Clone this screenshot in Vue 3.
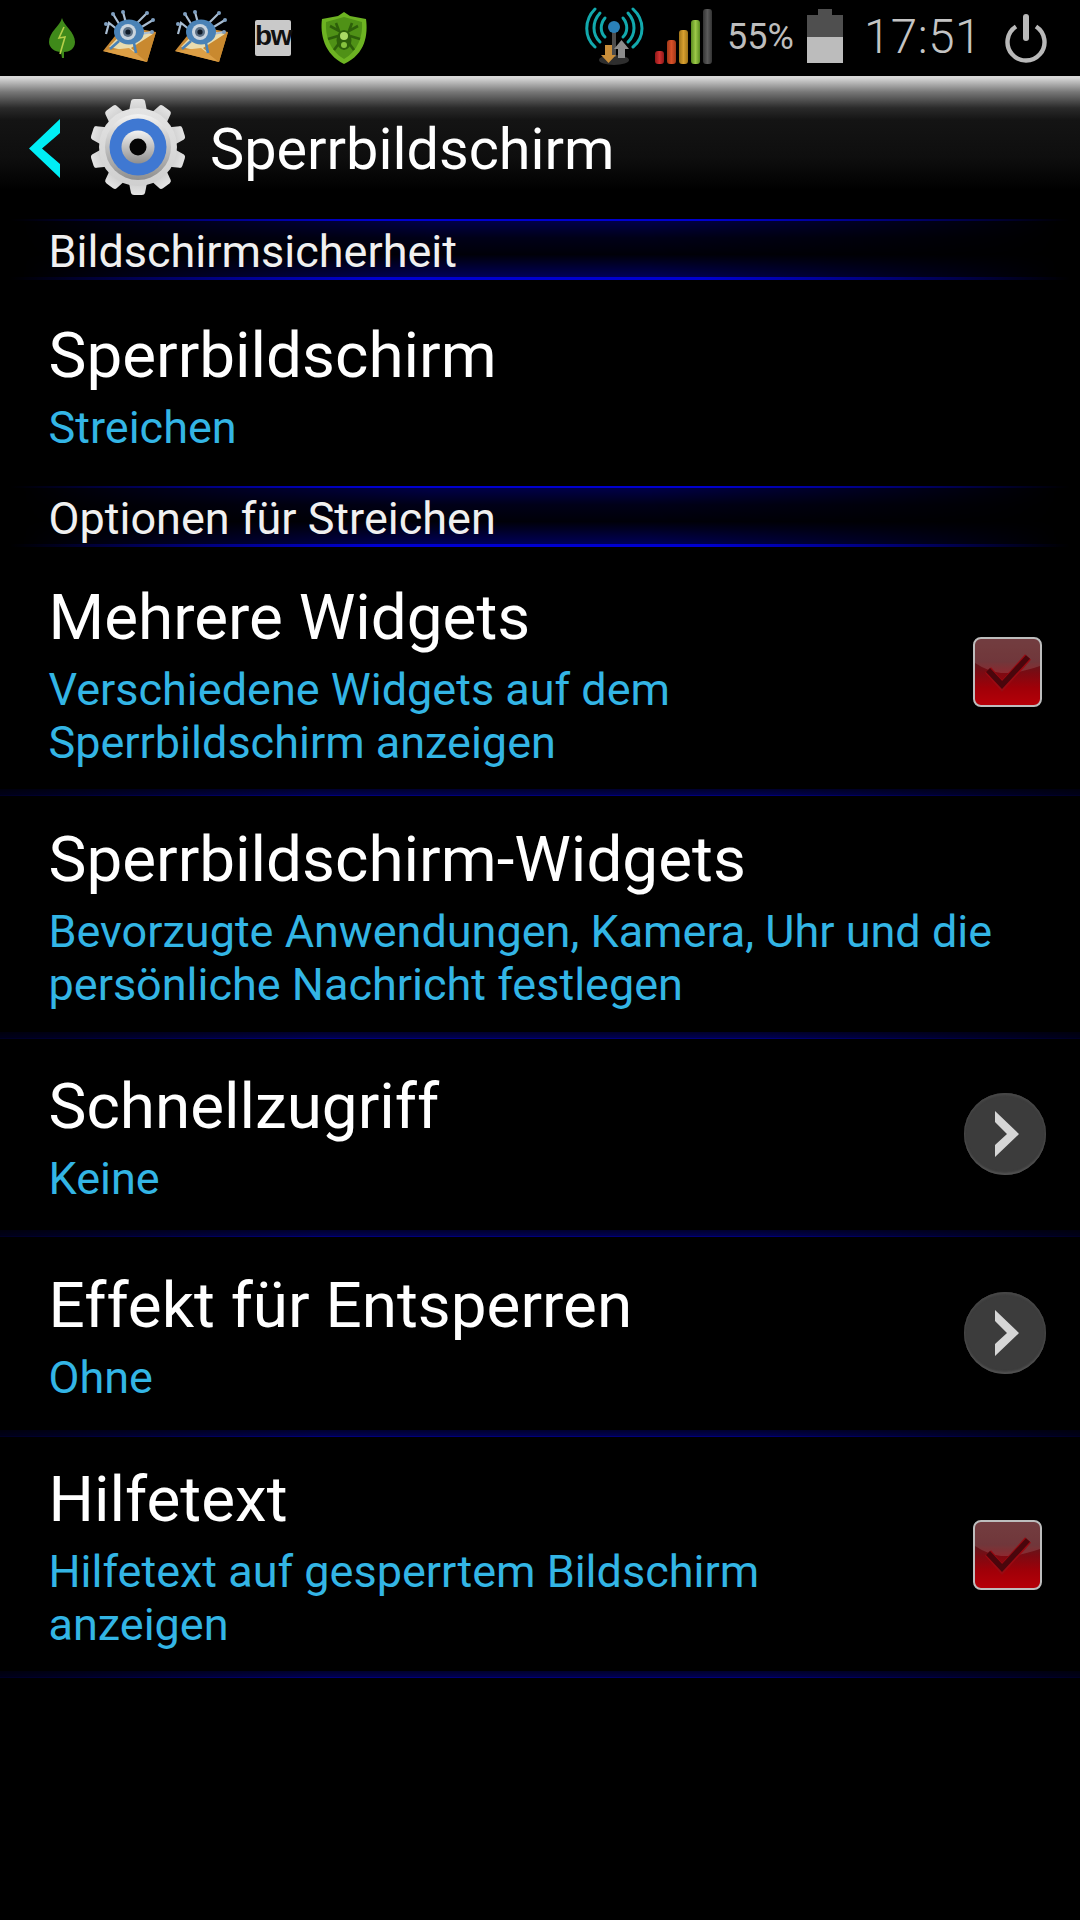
<script setup>
const teeth = [0, 36, 72, 108, 144, 180, 216, 252, 288, 324]
</script>

<template>
  <div class="screen">
    <div class="status">
      <div class="status-left">
        <svg class="ic leaf" viewBox="0 0 26 40"><path d="M13 0C15 8 26 14 26 24C26 31 20 34 15 34L15 40L13 40L12 34C6 34 0 30 0 24C0 14 11 8 13 0Z" fill="#3f8a1a"/><path d="M15 9L10 20L16 19L11 36" fill="none" stroke="#b6cf4a" stroke-width="1.6"/></svg>
        <svg v-for="n in 2" :key="n" class="ic mail" viewBox="0 0 54 54">
          <path d="M0 41L20 16L53 22L44 52Z" fill="#c98a35"/>
          <path d="M6 37L24 18L50 24L42 45Z" fill="#e9dcae"/>
          <path d="M0 41L26 38L44 52Z" fill="#dd9f45"/>
          <path d="M44 52L53 22L28 38Z" fill="#c9892f"/>
          <g fill="none" stroke="#a9bdd2" stroke-width="2.2">
            <path d="M18 17L10 4"/><path d="M23 13L20 2"/><path d="M33 14L44 3"/><path d="M37 18L50 10"/><path d="M38 24L49 22"/><path d="M15 20L6 13L3 24"/>
          </g>
          <g fill="#7f9fc0"><circle cx="10" cy="4" r="2"/><circle cx="20" cy="2" r="2"/><circle cx="44" cy="3" r="2"/><circle cx="50" cy="10" r="2"/><circle cx="3" cy="14" r="2"/><circle cx="49" cy="22" r="2"/></g>
          <ellipse cx="26" cy="22" rx="15" ry="12.5" fill="#4a82b6"/>
          <circle cx="25" cy="22" r="8" fill="#c9d4de"/><circle cx="25" cy="22" r="5" fill="#5b6f84"/><circle cx="25" cy="22" r="2.6" fill="#101b28"/>
          <g fill="none" stroke="#4a82b6" stroke-width="2.6"><path d="M16 31L7 39"/><path d="M31 33L33 43"/></g>
        </svg>
        <div class="bw"><span>bw</span></div>
        <svg class="ic shield" viewBox="0 0 48 52">
          <path d="M24 0L30 4L46 7C48 22 46 42 24 52C4 42 0 22 2 7L18 4Z" fill="#6db322"/>
          <path d="M24 5L42 10C43 24 38 39 24 47C10 39 5 24 6 10Z" fill="#4f9116"/>
          <g fill="none" stroke="#2d5f0a" stroke-width="2.6"><path d="M10 14L19 19L16 11"/><path d="M38 14L29 19L32 11"/><path d="M8 27L18 24"/><path d="M40 27L30 24"/><path d="M14 38L20 30"/><path d="M34 38L28 30"/></g>
          <ellipse cx="24" cy="28" rx="7.5" ry="10" fill="#2d5f0a"/><circle cx="24" cy="24" r="4" fill="#a9d964"/><circle cx="24" cy="33" r="3" fill="#86c23e"/>
        </svg>
      </div>
      <div class="status-right">
        <svg class="ic tower" viewBox="0 0 59 59">
          <g fill="none" stroke="#12a9ad" stroke-linecap="round" stroke-width="3">
            <path d="M10 2C-1 13 -1 30 10 40"/><path d="M15 6C7 15 7 27 15 35"/><path d="M20 11C15 17 15 25 20 30"/>
            <path d="M48 2C60 13 60 30 48 40"/><path d="M43 6C51 15 51 27 43 35"/><path d="M38 11C43 17 43 25 38 30"/>
          </g>
          <ellipse cx="29" cy="53" rx="15" ry="5" fill="#2e2e2e"/>
          <path d="M27 24h4v26h-4z" fill="#4c4c4c"/>
          <circle cx="29" cy="20" r="6" fill="#2a80b8"/>
          <path d="M36.500 33L44 42H40V51H33V42H29Z" fill="#8c8c8c"/>
          <path d="M20 38H27V48H31L23.500 56L16 48H20Z" fill="#c98e3a"/>
        </svg>
        <div class="bars">
          <i class="b1"></i><i class="b2"></i><i class="b3"></i><i class="b4"></i><i class="b5"></i>
        </div>
        <span class="pct">55%</span>
        <div class="battery"><i class="cap"></i><div class="cell"><i class="fill"></i></div></div>
        <span class="clock">17:51</span>
        <svg class="ic power" viewBox="0 0 42 50"><path d="M11 13.500A18.500 18.500 0 1 0 31 13.500" fill="none" stroke="#b9b9b9" stroke-width="4.400"/><path d="M21 4V25" stroke="#b9b9b9" stroke-width="6" stroke-linecap="round"/></svg>
      </div>
    </div>

    <header class="bar">
      <svg class="back" viewBox="0 0 32 59"><path d="M31 0V14L13 29.500L31 45V59L0 29.500Z" fill="#00eef5"/></svg>
      <svg class="gear" viewBox="0 0 96 96">
        <defs>
          <linearGradient id="ring" x1="0" y1="0" x2="0" y2="1"><stop offset="0" stop-color="#f2f2f2"/><stop offset="1" stop-color="#8f8f8f"/></linearGradient>
          <linearGradient id="body" x1="0" y1="0" x2="0" y2="1"><stop offset="0" stop-color="#e4e4e4"/><stop offset="1" stop-color="#cfcfcf"/></linearGradient>
        </defs>
        <g fill="url(#body)"><path v-for="a in teeth" :key="a" d="M39 12L41 2Q41.500 0 44 0H52Q54.500 0 55 2L57 12Z" :transform="`rotate(${a} 48 48)`"/></g>
        <circle cx="48" cy="48" r="39" fill="url(#body)"/>
        <circle cx="48" cy="48" r="33" fill="url(#ring)"/>
        <circle cx="48" cy="48" r="28.500" fill="#3f78d2"/>
        <circle cx="48" cy="48" r="16.500" fill="url(#ring)"/>
        <circle cx="48" cy="48" r="8.500" fill="#050505"/>
      </svg>
      <span class="bar-title">Sperrbildschirm</span>
    </header>

    <section class="head first">Bildschirmsicherheit</section>
    <div class="row r1">
      <div class="txt"><div class="t">Sperrbildschirm</div><div class="s">Streichen</div></div>
    </div>
    <section class="head">Optionen für Streichen</section>

    <div class="row r2 sep">
      <div class="txt"><div class="t">Mehrere Widgets</div><div class="s">Verschiedene Widgets auf dem<br>Sperrbildschirm anzeigen</div></div>
      <div class="check"><svg viewBox="0 0 65 66"><path d="M0 0H65V27Q42 35 26 34Q12 32 0 24Z" fill="#ffffff" opacity=".13"/><path d="M13 31L27 47L53 18" fill="none" stroke="#9a0a12" stroke-width="8"/><path d="M13 31L27 46L53 18" fill="none" stroke="#4a060c" stroke-width="5.500"/></svg></div>
    </div>
    <div class="row r3 sep">
      <div class="txt"><div class="t">Sperrbildschirm-Widgets</div><div class="s">Bevorzugte Anwendungen, Kamera, Uhr und die<br>persönliche Nachricht festlegen</div></div>
    </div>
    <div class="row r4 sep">
      <div class="txt"><div class="t">Schnellzugriff</div><div class="s">Keine</div></div>
      <div class="go"><svg viewBox="0 0 24 46"><path d="M0 0L24 23L0 46V34L12 23L0 11Z" fill="#d6d6d6"/></svg></div>
    </div>
    <div class="row r5 sep">
      <div class="txt"><div class="t">Effekt für Entsperren</div><div class="s">Ohne</div></div>
      <div class="go"><svg viewBox="0 0 24 46"><path d="M0 0L24 23L0 46V34L12 23L0 11Z" fill="#d6d6d6"/></svg></div>
    </div>
    <div class="row r6 sep">
      <div class="txt"><div class="t">Hilfetext</div><div class="s">Hilfetext auf gesperrtem Bildschirm<br>anzeigen</div></div>
      <div class="check up"><svg viewBox="0 0 65 66"><path d="M0 0H65V27Q42 35 26 34Q12 32 0 24Z" fill="#ffffff" opacity=".13"/><path d="M13 31L27 47L53 18" fill="none" stroke="#9a0a12" stroke-width="8"/><path d="M13 31L27 46L53 18" fill="none" stroke="#4a060c" stroke-width="5.500"/></svg></div>
    </div>
  </div>
</template>

<style>
html, body { margin: 0; background: #000; }
</style>

<style scoped>
.screen {
  width: 1080px;
  height: 1920px;
  background: #000;
  color: #fff;
  font-family: Roboto, "Liberation Sans", sans-serif;
  overflow: hidden;
}
.ic { display: block; flex: none; }
.status {
  height: 76px;
  display: flex;
  justify-content: space-between;
  align-items: center;
  padding: 0 33px 0 49px;
}
.status-left, .status-right { display: flex; align-items: center; }
.leaf { width: 26px; height: 40px; margin-right: 28px; }
.mail { width: 54px; height: 54px; margin-right: 18px; margin-top: -2px; }
.bw {
  width: 36px; height: 36px; margin: 0 0 0 8px;
  background: #c9c9c9; border-radius: 2px;
  color: #111; font: 700 28px/32px "Liberation Sans", sans-serif;
  text-align: center; letter-spacing: -1.500px;
}
.shield { width: 48px; height: 52px; margin-left: 29px; }
.tower { width: 59px; height: 59px; margin-right: 11px; margin-top: -3px; }
.bars { display: flex; align-items: flex-end; gap: 3px; height: 55px; margin-right: 15px; margin-top: -3px; }
.bars i { display: block; width: 9px; border-radius: 3px; }
.b1 { height: 13px; background: linear-gradient(90deg, #8f1818, #d03030, #8f1818); }
.b2 { height: 24px; background: linear-gradient(90deg, #a03818, #d85028, #a03818); }
.b3 { height: 34px; background: linear-gradient(90deg, #a07418, #d8a030, #a07418); }
.b4 { height: 44px; background: linear-gradient(90deg, #5a8c20, #9cc848, #5a8c20); }
.b5 { height: 55px; background: linear-gradient(90deg, #333, #5a5a5a, #333); }
.pct { font-size: 36px; color: #bdbdbd; width: 72px; margin-right: 8px; margin-top: -2px; }
.battery { width: 36px; display: flex; flex-direction: column; align-items: center; margin-right: 21px; margin-top: -4px; }
.cap { display: block; width: 14px; height: 6px; background: #4f4f4f; }
.cell { width: 36px; height: 48px; background: #4f4f4f; display: flex; align-items: flex-end; }
.fill { display: block; width: 100%; height: 26px; background: #bcbcbc; }
.clock { font-size: 47.500px; font-weight: 300; color: #c4c4c4; letter-spacing: .5px; width: 124px; margin-right: 17px; margin-top: -2px; }
.power { width: 42px; height: 50px; }

.bar {
  height: 114px;
  display: flex;
  align-items: center;
  border-top: 2px solid #d8d8d8;
  background: linear-gradient(#d6d6d6 0, #777 14px, #2a2a2a 30px, #141414 42px, #0e0e0e 80px, #000 112px);
}
.back { width: 32px; height: 59px; margin: 26px 0 0 29px; flex: none; }
.gear { width: 96px; height: 96px; margin: 24px 0 0 29px; flex: none; }
.bar-title { font-size: 57.600px; margin: 28px 0 0 24px; color: #fff; }

.head {
  height: 61px;
  box-sizing: border-box;
  padding: 2px 0 0 48.500px;
  font-size: 45px;
  line-height: 58px;
  color: #f0f0f0;
  border-image: linear-gradient(90deg, transparent 1%, #0000d0 35%, #0000d0 65%, transparent 99%) 1;
  border-top: 2px solid;
  border-bottom: 3px solid;
  background:
    linear-gradient(90deg, rgba(0,0,0,1) 2%, rgba(0,0,0,0) 40%, rgba(0,0,0,0) 60%, rgba(0,0,0,1) 98%),
    linear-gradient(#000048, #000018 30%, #000008 60%, #000058);
}
.head.first { margin-top: 27px; }

.row {
  display: flex;
  align-items: center;
  justify-content: space-between;
  padding: 0 0 0 48.500px;
  box-sizing: border-box;
}
.sep { position: relative; }
.sep::after {
  content: "";
  position: absolute;
  left: 0; right: 0; bottom: 0;
  height: 7px;
  background:
    linear-gradient(90deg, rgba(0,0,0,.7), rgba(0,0,0,0) 30%, rgba(0,0,0,0) 70%, rgba(0,0,0,.7)),
    linear-gradient(#00002c, #000050 84%, #00007a 84%);
}
.r1 { height: 206px; align-items: flex-start; padding-top: 35px; }
.r2 { height: 249px; }
.r3 { height: 243px; }
.r4 { height: 198px; }
.r5 { height: 200px; }
.r6 { height: 241px; }
.txt { margin-top: 1px; }
.r1 .txt { margin-top: 6px; }
.r2 .txt { margin-top: 8px; }
.t { font-size: 63.800px; line-height: 70px; color: #fff; }
.s { font-size: 45px; line-height: 53px; color: #33b5e5; margin-top: 10px; }
.check {
  width: 69px; height: 70px;
  margin: 0 38px 0 0;
  box-sizing: border-box;
  border: 2px solid #bdbdbd;
  border-radius: 8px;
  overflow: hidden;
  background: linear-gradient(#5e2024 0, #5b1a1e 34%, #7d0a12 52%, #a00008 74%, #b60008 100%);
}
.check.up { margin-bottom: 6px; }
.check svg { display: block; width: 100%; height: 100%; }
.go {
  width: 82px; height: 82px;
  margin: 0 34px 8px 0;
  border-radius: 50%;
  background: #3c3c3c;
  box-shadow: inset 0 -2px 2px #525252, inset 0 2px 2px #484848;
  display: flex; align-items: center; justify-content: center;
}
.go svg { width: 24px; height: 46px; margin-left: 4px; }
</style>
